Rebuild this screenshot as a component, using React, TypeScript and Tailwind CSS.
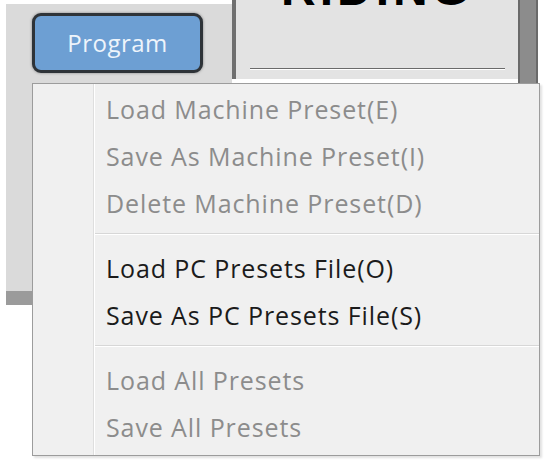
import React, { FC } from "react"

interface MenuItem {
    label: string
    enabled: boolean
}

const groups: MenuItem[][] = [
    [
        { label: "Load Machine Preset(E)", enabled: false },
        { label: "Save As Machine Preset(I)", enabled: false },
        { label: "Delete Machine Preset(D)", enabled: false },
    ],
    [
        { label: "Load PC Presets File(O)", enabled: true },
        { label: "Save As PC Presets File(S)", enabled: true },
    ],
    [
        { label: "Load All Presets", enabled: false },
        { label: "Save All Presets", enabled: false },
    ],
]

const App: FC = () => {
    return (
        <div className="relative w-[550px] h-[468px] bg-white overflow-hidden font-['Open_Sans',sans-serif]">
            {/* window behind the menu */}
            <div className="flex ml-[6px] mt-[4px]">
                <div className="w-[226px] h-[301px] bg-[#dadada] flex flex-col">
                    <div className="ml-[26px] mt-[9px] w-[171px] h-[60px] rounded-[9px] border-[3px] border-[#2e3338] bg-[#6d9fd3] shadow-[0_0_3px_rgba(0,0,0,0.4)] flex items-center justify-center">
                        <span className="text-[24px] text-[#eef4fb] tracking-[0.5px]">Program</span>
                    </div>
                    <div className="mt-auto h-[14px] bg-[#9b9b9b]" />
                </div>
                <div className="w-[4px] h-[79px] bg-[#6f6f6f] -mt-[4px]" />
                <div className="w-[282px] h-[79px] -mt-[4px] bg-[#e3e3e3] flex flex-col items-center overflow-hidden">
                    <div className="-mt-[35px] text-[48px] leading-none font-bold tracking-[4px] text-black font-['Liberation_Sans',sans-serif]">RIDING</div>
                    <div className="mt-auto mb-[9px] w-[255px] h-[2px] bg-[#6a6a6a] border-b border-white" />
                </div>
                <div className="w-[20px] h-[83px] -mt-[4px] bg-[#8c8c8c] border-x-2 border-[#6a6a6a]" />
            </div>

            {/* dropdown menu */}
            <div className="absolute left-[32px] top-[83px] w-[508px] h-[373px] bg-[#f0f0f0] border border-[#9c9c9c] shadow-[2px_2px_2px_rgba(0,0,0,0.12)] flex">
                <div className="w-[61px] shrink-0 border-r border-[#dedede]" />
                <div className="flex-1 flex flex-col pt-[2px] border-l border-white">
                    {groups.map((group, gi) => (
                        <div key={gi} className={gi > 0 ? "border-t border-[#d7d7d7] shadow-[inset_0_1px_0_#fff] pt-[11px] mt-[6px]" : ""}>
                            {group.map((item) => (
                                <div
                                    key={item.label}
                                    className={`h-[47px] flex items-center pl-[11px] text-[25px] tracking-[0.9px] ${item.enabled ? "text-[#1b1b1b]" : "text-[#8c8c8c]"}`}
                                >
                                    {item.label}
                                </div>
                            ))}
                        </div>
                    ))}
                </div>
            </div>
        </div>
    )
}

export default App
